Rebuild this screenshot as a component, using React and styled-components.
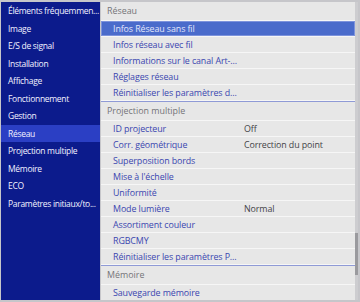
import React from "react";
import styled, { createGlobalStyle } from "styled-components";

const Global = createGlobalStyle`
  html, body { margin: 0; padding: 0; }
  body { width: 360px; height: 302px; overflow: hidden; background: #c4c4c8; font-family: "Open Sans", "Noto Sans", sans-serif; }
`;

const Screen = styled.div`
  width: 360px;
  height: 302px;
  box-sizing: border-box;
  padding: 2px 2px 2px 1px;
  display: flex;
  gap: 1px;
  background: #c6c6ca;
`;

const Sidebar = styled.div`
  width: 99px;
  background: #0c1b8c;
  display: flex;
  flex-direction: column;
  overflow: hidden;
`;

const SideItem = styled.div`
  height: 17.55px;
  line-height: 17.55px;
  padding-left: 7px;
  font-size: 8.5px;
  letter-spacing: -0.3px;
  color: #f2f2ff;
  white-space: nowrap;
  background: ${(p) => (p.$active ? "#2b3fc4" : "transparent")};
`;

const Main = styled.div`
  flex: 1;
  display: flex;
  background: #e7e7e7;
  overflow: hidden;
`;

const List = styled.div`
  flex: 1;
  display: flex;
  flex-direction: column;
`;

const Header = styled.div`
  height: 18px;
  line-height: 18px;
  padding-left: 6px;
  font-size: 8.9px;
  color: #747478;
  border-bottom: 1px solid #f6f6f6;
  border-top: ${(p) => (p.$first ? "none" : "1px solid #8f9ad6")};
`;

const Row = styled.div`
  height: 15px;
  line-height: 15px;
  display: flex;
  font-size: 8.9px;
  letter-spacing: -0.1px;
  white-space: nowrap;
  border-bottom: 1px solid #f6f6f6;
  color: ${(p) => (p.$selected ? "#e2e6fb" : "#3a46b0")};
  background: ${(p) => (p.$selected ? "#4a6bcb" : "transparent")};
  box-shadow: ${(p) => (p.$selected ? "inset 0 0 0 1px #7d93dc" : "none")};
`;

const Label = styled.span`
  width: 131px;
  padding-left: 12px;
`;

const Value = styled.span`
  color: #444448;
`;

const Scrollbar = styled.div`
  width: 3px;
  background: #cdcdd0;
  display: flex;
  flex-direction: column;
`;

const Thumb = styled.div`
  margin-top: ${(p) => p.$top}px;
  height: ${(p) => p.$h}px;
  background: #9a9a9e;
`;

const side = [
  "Éléments fréquemmen...",
  "Image",
  "E/S de signal",
  "Installation",
  "Affichage",
  "Fonctionnement",
  "Gestion",
  "Réseau",
  "Projection multiple",
  "Mémoire",
  "ECO",
  "Paramètres initiaux/to...",
];

const groups = [
  {
    title: "Réseau",
    rows: [
      ["Infos Réseau sans fil", "", true],
      ["Infos réseau avec fil"],
      ["Informations sur le canal Art-..."],
      ["Réglages réseau"],
      ["Réinitialiser les paramètres d..."],
    ],
  },
  {
    title: "Projection multiple",
    rows: [
      ["ID projecteur", "Off"],
      ["Corr. géométrique", "Correction du point"],
      ["Superposition bords"],
      ["Mise à l'échelle"],
      ["Uniformité"],
      ["Mode lumière", "Normal"],
      ["Assortiment couleur"],
      ["RGBCMY"],
      ["Réinitialiser les paramètres P..."],
    ],
  },
  {
    title: "Mémoire",
    rows: [["Sauvegarde mémoire"]],
  },
];

export default function App() {
  return (
    <>
      <Global />
      <Screen>
        <Sidebar>
          {side.map((s) => (
            <SideItem key={s} $active={s === "Réseau"}>
              {s}
            </SideItem>
          ))}
        </Sidebar>
        <Main>
          <List>
            {groups.map((g, gi) => (
              <React.Fragment key={g.title}>
                <Header $first={gi === 0}>{g.title}</Header>
                {g.rows.map(([l, v, sel]) => (
                  <Row key={l} $selected={sel}>
                    <Label>{l}</Label>
                    {v && <Value>{v}</Value>}
                  </Row>
                ))}
              </React.Fragment>
            ))}
          </List>
          <Scrollbar>
            <Thumb $top={231} $h={42} />
          </Scrollbar>
        </Main>
      </Screen>
    </>
  );
}
